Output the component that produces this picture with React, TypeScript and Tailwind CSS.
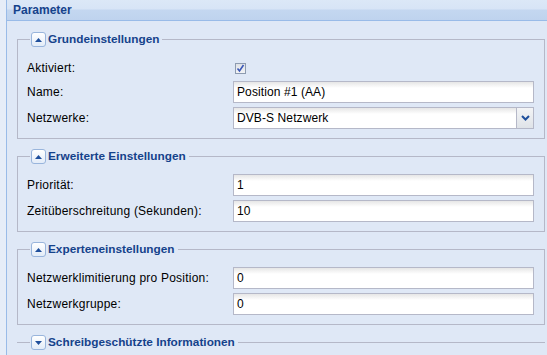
import React from "react";

const LINE = "border-[#b5b8c8]";

function CollapseBtn({ down }: { down?: boolean }) {
  return (
    <div className="ml-[1px] flex h-[15px] w-[15px] items-center justify-center rounded-[3px] border border-[#99b5dc] bg-[linear-gradient(#ffffff,#e3ecf8)]">
      <svg width="7" height="4" viewBox="0 0 7 4">
        {down ? (
          <polygon points="0,0 7,0 3.5,4" fill="#1f4f9c" />
        ) : (
          <polygon points="0,4 7,4 3.5,0" fill="#1f4f9c" />
        )}
      </svg>
    </div>
  );
}

function Legend({ title, collapsed }: { title: string; collapsed?: boolean }) {
  return (
    <div className="flex h-[15px] items-stretch">
      <div
        className={`mt-[7px] w-[13px] border-t ${LINE} ${collapsed ? "" : "border-l"}`}
      />
      <CollapseBtn down={collapsed} />
      <div className="ml-[2px] flex items-center text-[11.8px] font-bold leading-none text-[#15428b]">
        {title}
      </div>
      <div
        className={`ml-[3px] mt-[7px] flex-1 border-t ${LINE} ${collapsed ? "" : "border-r"}`}
      />
    </div>
  );
}

function Row({ label, children, className = "" }: { label: string; children: React.ReactNode; className?: string }) {
  return (
    <div className={`flex h-[22px] items-center ${className}`}>
      <div className="w-[206px] text-[12px] tracking-[0.22px] text-black">{label}</div>
      {children}
    </div>
  );
}

function TextField({ value }: { value: string }) {
  return (
    <div className="flex h-[22px] w-[301px] items-center border border-[#b5b8c8] bg-[linear-gradient(#e6e6e6,#ffffff_6px)] pl-[3px] text-[12px] tracking-[0.1px] text-black">
      {value}
    </div>
  );
}

function Combo({ value }: { value: string }) {
  return (
    <div className="flex h-[22px] w-[301px] border border-[#b5b8c8] bg-[linear-gradient(#e6e6e6,#ffffff_6px)] text-[12px] tracking-[0.1px] text-black">
      <div className="flex flex-1 items-center pl-[3px]">{value}</div>
      <div className="flex w-[17px] items-center justify-center border-l border-[#b5b8c8] bg-[linear-gradient(#f3f4f6,#dfe3e8)]">
        <svg width="9" height="6" viewBox="0 0 9 6">
          <polyline points="1,1 4.5,4.5 8,1" fill="none" stroke="#1f4f9c" strokeWidth="2" />
        </svg>
      </div>
    </div>
  );
}

function Checkbox() {
  return (
    <div className="ml-[2px] flex h-[11px] w-[11px] items-center justify-center border border-[#8d9bb0] bg-[linear-gradient(#dfe2e7,#f2f3f5)]">
      <svg width="9" height="9" viewBox="0 0 9 9">
        <polyline points="1.5,4.5 3.5,7 7.5,1" fill="none" stroke="#3a57b8" strokeWidth="1.6" />
      </svg>
    </div>
  );
}

function FieldSet({ title, children }: { title: string; children: React.ReactNode }) {
  return (
    <div>
      <Legend title={title} />
      <div className={`border-x border-b ${LINE} pb-[9px] pl-[9px] pr-[10px] pt-[10px]`}>
        {children}
      </div>
    </div>
  );
}

export default function App() {
  return (
    <div className="flex h-[355px] w-[547px] overflow-hidden bg-[#e6edf8] font-['Liberation_Sans',Arial,sans-serif]">
      <div className="w-[6px] shrink-0" />
      <div className="flex flex-1 flex-col border-l border-[#99bbe8] bg-[#dfe8f6]">
        <div className="flex h-[21px] shrink-0 items-center border-b border-[#99bbe8] bg-[linear-gradient(#dce8f7_0%,#d7e4f6_45%,#c4d7f0_50%,#bfd3ee_100%)] pl-[6px] text-[12px] font-bold text-[#15428b]">
          Parameter
        </div>
        <div className="flex flex-col gap-[10px] pl-[10px] pr-[2px] pt-[11px]">
          <FieldSet title="Grundeinstellungen">
            <Row label="Aktiviert:" className="mb-[2px]">
              <Checkbox />
            </Row>
            <Row label="Name:" className="mb-[4px]">
              <TextField value="Position #1 (AA)" />
            </Row>
            <Row label="Netzwerke:">
              <Combo value="DVB-S Netzwerk" />
            </Row>
          </FieldSet>
          <FieldSet title="Erweiterte Einstellungen">
            <Row label="Priorität:" className="mb-[4px]">
              <TextField value="1" />
            </Row>
            <Row label="Zeitüberschreitung (Sekunden):">
              <TextField value="10" />
            </Row>
          </FieldSet>
          <FieldSet title="Experteneinstellungen">
            <Row label="Netzwerklimitierung pro Position:" className="mb-[4px]">
              <TextField value="0" />
            </Row>
            <Row label="Netzwerkgruppe:">
              <TextField value="0" />
            </Row>
          </FieldSet>
          <Legend title="Schreibgeschützte Informationen" collapsed />
        </div>
      </div>
    </div>
  );
}
